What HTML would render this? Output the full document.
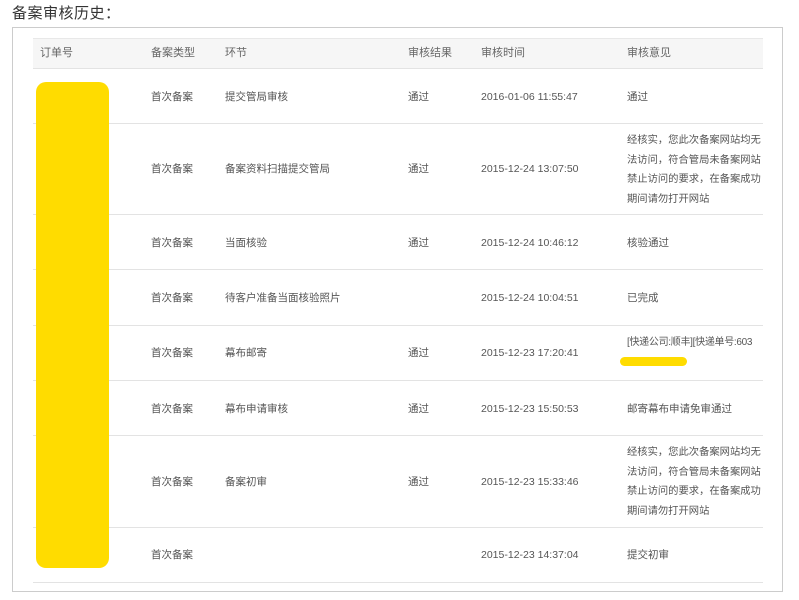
<!DOCTYPE html>
<html><head><meta charset="utf-8"><style>
body{margin:0;width:799px;height:600px;background:#fff;font-family:"Liberation Sans","Noto Sans CJK SC",sans-serif;position:relative;overflow:hidden;color:#555}
.t{position:absolute;left:12px;top:2px;font-size:15px;color:#333;letter-spacing:0.5px}
.box{position:absolute;left:12px;top:27px;width:771px;height:565px;border:1px solid #ccc;box-sizing:border-box}
.hd{position:absolute;left:33px;top:38px;width:730px;height:30px;background:#f6f6f6;border-top:1px solid #e8e8e8}
.ln{position:absolute;left:33px;width:730px;height:1px;background:#e3e3e3}
.c{position:absolute;font-size:10.5px;white-space:nowrap;line-height:12px}
.h{font-size:11px;color:#666}
.m{position:absolute;left:627px;font-size:10.3px;line-height:19.5px;color:#555}
</style></head><body>
<div class="t">备案审核历史：</div>
<div class="box"></div>
<div class="hd"></div>
<div class="c h" style="left:40px;top:47px">订单号</div>
<div class="c h" style="left:151px;top:47px">备案类型</div>
<div class="c h" style="left:225px;top:47px">环节</div>
<div class="c h" style="left:408px;top:47px">审核结果</div>
<div class="c h" style="left:481px;top:47px">审核时间</div>
<div class="c h" style="left:627px;top:47px">审核意见</div>
<div class="ln" style="top:68px"></div>
<div class="ln" style="top:123px"></div>
<div class="ln" style="top:214px"></div>
<div class="ln" style="top:269px"></div>
<div class="ln" style="top:325px"></div>
<div class="ln" style="top:380px"></div>
<div class="ln" style="top:435px"></div>
<div class="ln" style="top:527px"></div>
<div class="ln" style="top:582px"></div>

<div class="c" style="left:151px;top:91px">首次备案</div><div class="c" style="left:225px;top:91px">提交管局审核</div><div class="c" style="left:408px;top:91px">通过</div><div class="c" style="left:481px;top:91px">2016-01-06 11:55:47</div><div class="c" style="left:627px;top:91px">通过</div>

<div class="c" style="left:151px;top:163px">首次备案</div><div class="c" style="left:225px;top:163px">备案资料扫描提交管局</div><div class="c" style="left:408px;top:163px">通过</div><div class="c" style="left:481px;top:163px">2015-12-24 13:07:50</div>
<div class="m" style="top:131px">经核实，您此次备案网站均无<br>法访问，符合管局未备案网站<br>禁止访问的要求，在备案成功<br>期间请勿打开网站</div>

<div class="c" style="left:151px;top:237px">首次备案</div><div class="c" style="left:225px;top:237px">当面核验</div><div class="c" style="left:408px;top:237px">通过</div><div class="c" style="left:481px;top:237px">2015-12-24 10:46:12</div><div class="c" style="left:627px;top:237px">核验通过</div>

<div class="c" style="left:151px;top:292px">首次备案</div><div class="c" style="left:225px;top:292px">待客户准备当面核验照片</div><div class="c" style="left:481px;top:292px">2015-12-24 10:04:51</div><div class="c" style="left:627px;top:292px">已完成</div>

<div class="c" style="left:151px;top:347px">首次备案</div><div class="c" style="left:225px;top:347px">幕布邮寄</div><div class="c" style="left:408px;top:347px">通过</div><div class="c" style="left:481px;top:347px">2015-12-23 17:20:41</div><div class="c" style="left:627px;top:337px;font-size:10px;letter-spacing:-0.3px">[快递公司:顺丰][快递单号:603</div>
<div style="position:absolute;left:620px;top:357px;width:67px;height:9px;border-radius:5px;background:#ffdc00"></div>

<div class="c" style="left:151px;top:403px">首次备案</div><div class="c" style="left:225px;top:403px">幕布申请审核</div><div class="c" style="left:408px;top:403px">通过</div><div class="c" style="left:481px;top:403px">2015-12-23 15:50:53</div><div class="c" style="left:627px;top:403px">邮寄幕布申请免审通过</div>

<div class="c" style="left:151px;top:476px">首次备案</div><div class="c" style="left:225px;top:476px">备案初审</div><div class="c" style="left:408px;top:476px">通过</div><div class="c" style="left:481px;top:476px">2015-12-23 15:33:46</div>
<div class="m" style="top:443px">经核实，您此次备案网站均无<br>法访问，符合管局未备案网站<br>禁止访问的要求，在备案成功<br>期间请勿打开网站</div>

<div class="c" style="left:151px;top:549px">首次备案</div><div class="c" style="left:481px;top:549px">2015-12-23 14:37:04</div><div class="c" style="left:627px;top:549px">提交初审</div>

<div style="position:absolute;left:36px;top:82px;width:73px;height:486px;border-radius:10px;background:#ffdc00"></div>
</body></html>
